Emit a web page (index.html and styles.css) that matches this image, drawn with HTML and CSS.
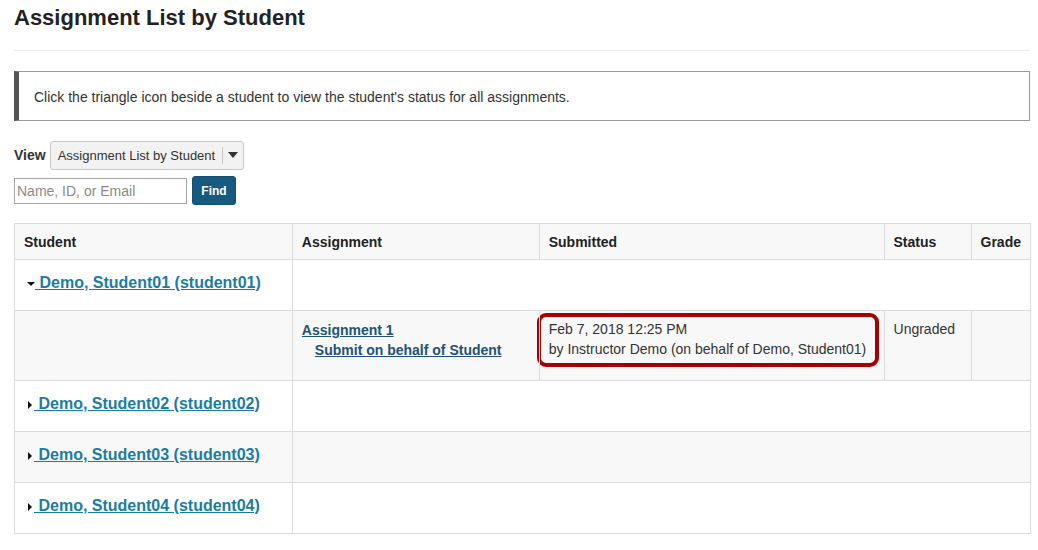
FILE: index.html
```html
<!DOCTYPE html>
<html>
<head>
<meta charset="utf-8">
<link rel="stylesheet" href="styles.css">
</head>
<body>
<div class="page">
  <h1 class="title">Assignment List by Student</h1>
  <div class="info">Click the triangle icon beside a student to view the student's status for all assignments.</div>
  <div class="view-row">
    <span class="view-label">View</span>
    <div class="select">
      <span class="select-text">Assignment List by Student</span>
      <span class="select-div"></span>
      <span class="select-caret"></span>
    </div>
  </div>
  <div class="search-row">
    <input class="search" type="text" placeholder="Name, ID, or Email">
    <button class="find">Find</button>
  </div>
  <table class="grid">
    <thead>
      <tr>
        <th class="c-student">Student</th>
        <th class="c-assign">Assignment</th>
        <th class="c-sub">Submitted</th>
        <th class="c-status">Status</th>
        <th class="c-grade">Grade</th>
      </tr>
    </thead>
    <tbody>
      <tr class="srow">
        <td><span class="tri tri-down"></span><a class="student" href="#">&nbsp;Demo, Student01 (student01)</a></td>
        <td colspan="4"></td>
      </tr>
      <tr class="drow">
        <td></td>
        <td class="d-assign"><a class="assign" href="#">Assignment 1</a><br><a class="behalf" href="#">Submit on behalf of Student</a></td>
        <td class="d-sub"><div class="highlight">Feb 7, 2018 12:25 PM<br>by Instructor Demo (on behalf of Demo, Student01)</div></td>
        <td>Ungraded</td>
        <td></td>
      </tr>
      <tr class="srow">
        <td><span class="tri tri-right"></span><a class="student" href="#">&nbsp;Demo, Student02 (student02)</a></td>
        <td colspan="4"></td>
      </tr>
      <tr class="srow alt">
        <td><span class="tri tri-right"></span><a class="student" href="#">&nbsp;Demo, Student03 (student03)</a></td>
        <td colspan="4"></td>
      </tr>
      <tr class="srow">
        <td><span class="tri tri-right"></span><a class="student" href="#">&nbsp;Demo, Student04 (student04)</a></td>
        <td colspan="4"></td>
      </tr>
    </tbody>
  </table>
</div>
</body>
</html>
```

FILE: styles.css
```css
html, body {
  margin: 0;
  padding: 0;
  background: #fff;
}
body {
  font-family: "Liberation Sans", Arial, sans-serif;
  color: #333;
  font-size: 14px;
}
.page {
  padding: 5px 8px 0 14px;
}
.title {
  margin: 0;
  font-size: 22px;
  line-height: 26px;
  font-weight: bold;
  color: #222;
  padding-bottom: 19px;
  border-bottom: 1px solid #eee;
}
.info {
  margin-top: 20px;
  height: 48px;
  box-sizing: content-box;
  border: 1px solid #9a9a9a;
  border-left: 5px solid #555;
  padding: 0 0 0 15px;
  line-height: 50px;
  font-size: 14px;
  color: #333;
}
.view-row {
  margin-top: 19px;
  display: flex;
  align-items: center;
  gap: 4px;
  height: 30px;
}
.view-label {
  font-weight: bold;
  font-size: 14px;
  color: #333;
}
.select {
  display: flex;
  align-items: center;
  height: 27px;
  width: 192px;
  border: 1px solid #c8c8c8;
  border-radius: 3px;
  background: #f2f2f2;
  box-sizing: content-box;
}
.select-text {
  font-size: 13px;
  color: #333;
  padding-left: 7px;
  width: 164px;
}
.select-div {
  width: 1px;
  height: 17px;
  background: #c8c8c8;
}
.select-caret {
  margin-left: 5px;
  width: 0;
  height: 0;
  border-left: 5px solid transparent;
  border-right: 5px solid transparent;
  border-top: 6px solid #333;
}
.search-row {
  margin-top: 6px;
  display: flex;
  align-items: center;
  gap: 5px;
}
.search {
  width: 173px;
  height: 26px;
  box-sizing: border-box;
  border: 1px solid #a6a6a6;
  padding: 0 2px;
  font-family: "Liberation Sans", Arial, sans-serif;
  font-size: 14px;
  color: #333;
  margin: 0;
}
.search::placeholder {
  color: #8a8a8a;
}
.find {
  width: 44px;
  height: 29px;
  margin: 0;
  background: #165a7f;
  color: #fff;
  border: 1px solid #134f70;
  border-radius: 3px;
  font-family: "Liberation Sans", Arial, sans-serif;
  font-weight: bold;
  font-size: 12px;
  padding: 0;
}
.grid {
  margin-top: 18px;
  border-collapse: collapse;
  width: 1017px;
  font-size: 14px;
}
.grid th, .grid td {
  border: 1px solid #dcdcdc;
  text-align: left;
  vertical-align: top;
  padding: 0 9px;
}
.grid th {
  background: #f8f8f8;
  font-weight: bold;
  color: #222;
  padding-top: 8px;
  padding-bottom: 7px;
  line-height: 20px;
}
.c-student { width: 259px; }
.c-assign { width: 228px; }
.c-sub { width: 326px; }
.c-status { width: 68px; }
.grid .srow td {
  padding-top: 13px;
  padding-bottom: 17px;
  line-height: 20px;
  background: #fff;
}
.grid .srow.alt td {
  background: #f8f8f8;
}
.grid .srow td:first-child {
  padding-left: 10px;
}
.grid .drow td {
  background: #f8f8f8;
  padding-top: 8px;
  padding-bottom: 4px;
  line-height: 20px;
  color: #333;
  height: 57px;
}
.grid .drow td.d-assign {
  padding-top: 9px;
  height: 56px;
}
.tri {
  display: inline-block;
  width: 0;
  height: 0;
  vertical-align: middle;
}
.tri-down {
  margin-left: 2px;
  border-left: 4px solid transparent;
  border-right: 4px solid transparent;
  border-top: 4px solid #111;
}
.tri-right {
  margin-left: 3px;
  margin-right: 2px;
  border-top: 4px solid transparent;
  border-bottom: 4px solid transparent;
  border-left: 4px solid #111;
}
.student {
  color: #1a7ca6;
  font-weight: bold;
  font-size: 16px;
  text-decoration: underline;
}
.assign {
  color: #215376;
  font-weight: bold;
  font-size: 14px;
  text-decoration: underline;
}
.behalf {
  color: #215376;
  font-weight: bold;
  font-size: 14px;
  text-decoration: underline;
  margin-left: 13px;
}
.highlight {
  margin: -6px -4px 0 -12px;
  padding: 2px 8px 4px 8px;
  border: 4px solid #a80000;
  border-radius: 9px;
  line-height: 20px;
  color: #333;
}
```
